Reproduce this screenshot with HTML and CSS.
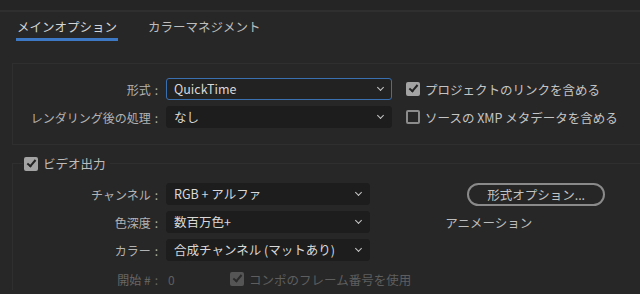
FILE: index.html
```html
<!DOCTYPE html>
<html lang="ja">
<head>
    <meta charset="UTF-8">
    <meta name="viewport" content="width=device-width, initial-scale=1.0">
    <title>出力モジュール設定</title>
    <link rel="stylesheet" href="styles.css">
</head>
<body>
    <div class="topbar"></div>
    <div class="tabs">
        <div class="tab active">メインオプション</div>
        <div class="tab">カラーマネジメント</div>
    </div>

    <div class="panel">
        <div class="row">
            <div class="label">形式<span class="colon">:</span></div>
            <div class="select focus">QuickTime<span class="chev"></span></div>
            <div class="check-row">
                <span class="box checked"></span>
                <span>プロジェクトのリンクを含める</span>
            </div>
        </div>
        <div class="row">
            <div class="label">レンダリング後の処理<span class="colon">:</span></div>
            <div class="select">なし<span class="chev"></span></div>
            <div class="check-row">
                <span class="box"></span>
                <span>ソースの XMP メタデータを含める</span>
            </div>
        </div>
    </div>

    <fieldset class="video">
        <legend class="check-row">
            <span class="box checked"></span>
            <span>ビデオ出力</span>
        </legend>
        <div class="video-grid">
            <div class="video-rows">
                <div class="row">
                    <div class="label">チャンネル<span class="colon">:</span></div>
                    <div class="select narrow">RGB + アルファ<span class="chev"></span></div>
                </div>
                <div class="row">
                    <div class="label">色深度<span class="colon">:</span></div>
                    <div class="select narrow">数百万色+<span class="chev"></span></div>
                </div>
                <div class="row">
                    <div class="label">カラー<span class="colon">:</span></div>
                    <div class="select narrow">合成チャンネル (マットあり)<span class="chev"></span></div>
                </div>
                <div class="row disabled">
                    <div class="label">開始 #<span class="colon">:</span></div>
                    <div class="start-value">0</div>
                    <div class="check-row">
                        <span class="box checked"></span>
                        <span>コンポのフレーム番号を使用</span>
                    </div>
                </div>
            </div>
            <div class="video-side">
                <button class="pill">形式オプション...</button>
                <div class="codec">アニメーション</div>
            </div>
        </div>
    </fieldset>
</body>
</html>
```

FILE: styles.css
```css
body {
  margin: 0;
  width: 640px;
  height: 294px;
  overflow: hidden;
  background: #272727;
  color: #c4c4c4;
  font-family: "Noto Sans CJK JP", "Noto Sans", sans-serif;
  font-size: 12px;
}

.topbar {
  height: 10px;
  background: #252525;
  border-bottom: 2px solid #2f2f2f;
}

.tabs {
  display: flex;
  gap: 30px;
  padding-left: 16px;
  height: 30px;
}

.tab {
  padding-top: 5px;
  font-size: 12.5px;
  color: #bdbdbd;
}

.tab.active {
  color: #d4d4d4;
  height: 21px;
  border-bottom: 3px solid #3c78c4;
  padding-left: 1px;
  padding-right: 1px;
}

.panel {
  margin: 21px 0 0 12px;
  width: 628px;
  box-sizing: border-box;
  border: 1px solid #2f2f2f;
  border-right: none;
  padding: 14px 0 16px;
  display: flex;
  flex-direction: column;
  gap: 6px;
}

.row {
  display: flex;
  align-items: center;
  height: 22px;
}

.label {
  width: 145px;
  flex-shrink: 0;
  text-align: right;
  color: #b3b3b3;
  margin-right: 8px;
  font-size: 12px;
}

.colon {
  margin-left: 4px;
}

.select {
  position: relative;
  box-sizing: border-box;
  width: 226px;
  height: 22px;
  line-height: 20px;
  padding-left: 7px;
  background: #1d1d1d;
  border: 1px solid #1d1d1d;
  border-radius: 3px;
  color: #d8d8d8;
  font-size: 12.5px;
}

.select.focus {
  background: #222222;
  border: 1.5px solid #3a6fb0;
  line-height: 19px;
}

.select.narrow {
  width: 204px;
}

.chev {
  position: absolute;
  right: 8px;
  top: 6px;
  width: 4px;
  height: 4px;
  border-right: 1.5px solid #c8c8c8;
  border-bottom: 1.5px solid #c8c8c8;
  transform: rotate(45deg);
}

.check-row {
  display: flex;
  align-items: center;
  gap: 5px;
  margin-left: 14px;
  font-size: 12.5px;
  color: #c4c4c4;
}

.box {
  position: relative;
  box-sizing: border-box;
  width: 14px;
  height: 14px;
  border: 2px solid #8c8c8c;
  border-radius: 2px;
}

.box.checked {
  background: #a3a3a3;
  border-color: #a3a3a3;
}

.box.checked::after {
  content: "";
  position: absolute;
  left: 3px;
  top: -1px;
  width: 3px;
  height: 7px;
  border-right: 2px solid #232323;
  border-bottom: 2px solid #232323;
  transform: rotate(40deg);
}

.video {
  margin: 9px 0 0 12px;
  width: 628px;
  box-sizing: border-box;
  border: 1px solid #2f2f2f;
  border-right: none;
  border-bottom: none;
  padding: 10px 0 0;
}

.video legend {
  margin-left: 10px;
  padding: 0 4px 0 1px;
}

.video legend span:last-child {
  color: #bcbcbc;
}

.video-grid {
  display: flex;
}

.video-rows {
  display: flex;
  flex-direction: column;
  gap: 6px;
}

.video-rows .row:nth-child(3) {
  margin-bottom: 1px;
}

.row.disabled .label {
  color: #676767;
}

.start-value {
  width: 62px;
  margin-left: 2px;
  color: #5f5f5f;
}

.row.disabled .check-row {
  margin-left: 0;
  color: #5e5e5e;
}

.row.disabled .box.checked {
  background: #555555;
  border-color: #555555;
}

.row.disabled .box.checked::after {
  border-color: #2a2a2a;
}

.video-side {
  margin-left: 34px;
  display: flex;
  flex-direction: column;
}

.pill {
  margin-left: 22px;
  width: 138px;
  height: 23px;
  border: 2px solid #8a8a8a;
  border-radius: 12px;
  background: #262626;
  color: #c2c2c2;
  font-family: inherit;
  font-size: 12.5px;
  padding: 0;
}

.codec {
  margin-top: 7px;
  color: #bcbcbc;
  font-size: 12.5px;
}
```
